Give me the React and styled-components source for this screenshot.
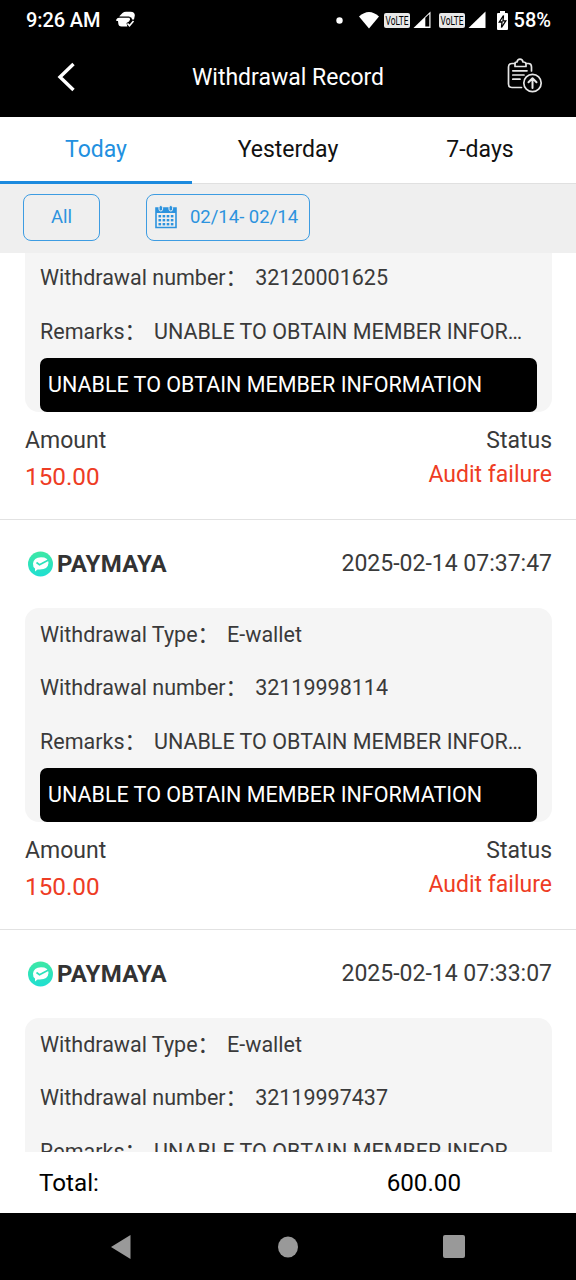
import styled, { createGlobalStyle } from 'styled-components';

const records = [
  { id: '32120001625', type: 'E-wallet', time: '2025-02-14 07:41:22', amount: '150.00' },
  { id: '32119998114', type: 'E-wallet', time: '2025-02-14 07:37:47', amount: '150.00' },
  { id: '32119997437', type: 'E-wallet', time: '2025-02-14 07:33:07', amount: '150.00' },
];

const REMARK = 'UNABLE TO OBTAIN MEMBER INFORMATION';

const GlobalStyle = createGlobalStyle`
  * {
    box-sizing: border-box;
  }
  body {
    margin: 0;
    background: #000;
    font-family: Roboto, 'Noto Sans CJK SC', sans-serif;
  }
  svg {
    display: block;
    flex-shrink: 0;
  }
`;

const Screen = styled.div`
  width: 576px;
  height: 1280px;
  display: flex;
  flex-direction: column;
  overflow: hidden;
  background: #fff;
`;

const StatusBar = styled.div`
  height: 40px;
  flex-shrink: 0;
  display: flex;
  align-items: center;
  justify-content: space-between;
  padding: 0 25px 0 26px;
  background: #000;
  color: #fff;
  font-size: 20px;
  font-weight: 500;
`;

const StatusGroup = styled.div`
  display: flex;
  align-items: center;
`;

const Clock = styled.span`
  letter-spacing: -0.1px;
  margin-right: 16px;
`;

const Network = styled(StatusGroup)`
  gap: 3px;
  margin-right: ${(props) => props.$gap};
`;

const Battery = styled.span`
  margin-left: 6px;
`;

const Header = styled.header`
  height: 77px;
  flex-shrink: 0;
  display: grid;
  grid-template-columns: 132px 1fr 132px;
  align-items: center;
  padding-bottom: 3px;
  background: #000;
  color: #fff;
`;

const BackButton = styled.button`
  height: 60px;
  padding: 0;
  border: none;
  background: none;
  display: flex;
  align-items: center;
  justify-content: center;
`;

const HeaderTitle = styled.h1`
  margin: 0;
  font-size: 23px;
  font-weight: 400;
  text-align: center;
`;

const HeaderAction = styled(BackButton)`
  justify-content: flex-end;
  padding: 0 33px 4px 0;
`;

const Tabs = styled.nav`
  height: 67px;
  flex-shrink: 0;
  display: grid;
  grid-template-columns: repeat(3, 1fr);
  border-bottom: 1px solid #e0e0e0;
`;

const Tab = styled.div`
  height: 67px;
  padding-bottom: ${(props) => (props.$active ? '0' : '3px')};
  display: flex;
  align-items: center;
  justify-content: center;
  font-size: 23px;
  color: ${(props) => (props.$active ? '#2290e0' : '#111')};
  border-bottom: ${(props) => props.$active && '3px solid #1c8ade'};
`;

const Filters = styled.div`
  height: 69px;
  flex-shrink: 0;
  display: flex;
  align-items: flex-start;
  gap: 46px;
  padding: 10px 23px;
  background: #efefef;
`;

const FilterButton = styled.button`
  width: ${(props) => props.$width};
  height: 47px;
  display: flex;
  align-items: center;
  justify-content: center;
  gap: 13px;
  padding: 0 ${(props) => props.$inset || '0'} 1px 0;
  border: 1px solid #3d9ce2;
  border-radius: 8px;
  background: none;
  color: #2c93de;
  font-family: inherit;
  font-size: 18.5px;
`;

const List = styled.main`
  height: 899px;
  flex-shrink: 0;
  overflow: hidden;
`;

/* list is scrolled part of the way through the first record */
const Scrolled = styled.div`
  margin-top: -143px;
`;

const Record = styled.article`
  height: 410px;
  padding: 0 24px 0 25px;
  border-bottom: 1px solid #e2e2e2;
  color: #3a3a3a;
`;

const RecordTop = styled.div`
  height: 87.5px;
  display: flex;
  align-items: center;
  justify-content: space-between;
`;

const Wallet = styled.div`
  display: flex;
  align-items: center;
  gap: 4px;
  padding-left: 3px;
  color: #333;
  font-size: 24px;
  font-weight: 700;
  letter-spacing: 0.25px;
`;

const Time = styled.span`
  font-size: 23px;
`;

const Card = styled.div`
  height: 214.5px;
  padding: 0 15px;
  border-radius: 14px;
  background: #f5f5f5;
`;

const Row = styled.div`
  height: 53.5px;
  display: flex;
  font-size: 21.5px;
  line-height: 53px;
`;

const Label = styled.span`
  white-space: nowrap;
`;

const Value = styled.span`
  margin-left: 8px;
  max-width: 373px;
  overflow: hidden;
  text-overflow: ellipsis;
  white-space: nowrap;
`;

const RemarkBox = styled.div`
  height: 54px;
  padding: 0 8px 2px;
  display: flex;
  align-items: center;
  border-radius: 7px;
  background: #000;
  color: #fff;
  font-size: 21.5px;
  white-space: nowrap;
`;

const Summary = styled.div`
  display: flex;
  justify-content: space-between;
  padding-top: 11px;
`;

const SummaryColumn = styled.div`
  text-align: ${(props) => props.$align || 'left'};
  font-size: 23px;
  line-height: 36px;
`;

const Amount = styled.div`
  color: #ee3c24;
  font-size: 24.3px;
  line-height: 35px;
`;

const State = styled.div`
  color: #ee3c24;
  line-height: 31px;
`;

const Total = styled.footer`
  height: 61px;
  flex-shrink: 0;
  display: flex;
  align-items: center;
  justify-content: space-between;
  padding: 0 115px 0 39px;
  color: #000;
  font-size: 24.2px;
`;

const NavBar = styled.div`
  flex: 1;
  display: grid;
  grid-template-columns: 133px 1fr 133px;
  align-items: center;
  background: #000;
`;

const NavItem = styled.div`
  display: flex;
  justify-content: ${(props) => props.$justify};
  padding-right: ${(props) => props.$justify === 'flex-end' && '2px'};
`;

const VolteBadge = () => (
  <svg width="26" height="15" viewBox="0 0 26 15">
    <rect width="26" height="15" rx="2" fill="#e8e8e8" />
    <text
      x="13"
      y="12"
      textAnchor="middle"
      textLength="23"
      lengthAdjust="spacingAndGlyphs"
      fontSize="12"
      fontWeight="400"
      fill="#000"
    >
      VoLTE
    </text>
  </svg>
);

const NotificationIcon = () => (
  <svg width="20" height="18" viewBox="0 0 20 18">
    <path d="M3.500 5 6.500 2Q8 .7 10 .7H14.500Q19 .7 18.800 4.500L18 8.500H16L15.500 6.700 13 5.500H3.500Z" fill="#fff" />
    <path d="M.3 8.500Q1 6.800 3 6.800H13.500Q15 8.500 13 10.500L10.500 12 11.300 15.500H5.500Q2.500 15.500 2.300 12.500L2 10H.3Z" fill="#fff" />
    <path d="m11.500 12.500 2 2.200L17.500 10" fill="none" stroke="#fff" strokeWidth="1.600" />
  </svg>
);

const WifiIcon = () => (
  <svg width="20" height="18" viewBox="0 0 20 18">
    <path d="M0 5.500Q10-3.500 20 5.500L10 17.500Z" fill="#fff" />
  </svg>
);

const DotIcon = () => (
  <svg width="7" height="7" viewBox="0 0 7 7">
    <circle cx="3.500" cy="3.500" r="3.200" fill="#fff" />
  </svg>
);

const Signal = ({ weak }) => (
  <svg width="18" height="18" viewBox="0 0 18 18">
    <path d="M17.500 .5V17H.5Z" fill="#fff" />
    {weak && <path d="M12.300 6.800 16.300 3V15.500H12.300Z" fill="#000" />}
  </svg>
);

const BatteryIcon = () => (
  <svg width="11" height="19" viewBox="0 0 11 19">
    <path d="M3 0H8V2H10Q11 2 11 3V18Q11 19 10 19H1Q0 19 0 18V3Q0 2 1 2H3Z" fill="#fff" />
    <path d="M6.500 4.500 2.300 11H5L4.500 16.500 8.800 9.800H6Z" fill="none" stroke="#000" strokeWidth="1.300" />
  </svg>
);

const RecordIcon = () => (
  <svg width="36" height="35" viewBox="0 0 36 35" fill="none" stroke="#e6e6e6" strokeWidth="1.700" strokeLinecap="round" strokeLinejoin="round">
    <path d="M8 5.500H5Q1.500 5.500 1.500 9V26Q1.500 29.500 5 29.500H14.500M19 5.500H21.500Q24.500 5.500 24.500 9V13" />
    <path d="M8 8.500V5.500Q8 4 10 4Q10.500 1.200 13 1.200T16 4Q19 4 19 6V8.500Z" />
    <path d="M5.800 12.800H20M5.800 17H17M5.800 21.200H13" />
    <circle cx="25.500" cy="25" r="8.700" />
    <path d="M25.500 30V20.500M21.500 24.200 25.500 20.300 29.500 24.200" strokeWidth="2" />
  </svg>
);

const CalendarIcon = () => (
  <svg width="22" height="24" viewBox="0 0 22 24">
    <path d="M1 3H21V22.500H1Z" fill="none" stroke="#2c93de" strokeWidth="1.600" />
    <path d="M1 3H21V8H1Z" fill="#2c93de" />
    {[5.800, 15.800].map((x) => (
      <rect key={x} x={x - 1.800} y="0.500" width="3.600" height="5.500" rx="1.800" fill="#2c93de" stroke="#efefef" />
    ))}
    {[10, 14, 18].map((y) =>
      [3.500, 7.600, 11.700, 15.800].map((x) => (
        <rect key={`${x}-${y}`} x={x} y={y} width="2.600" height="2.400" fill="#2c93de" />
      ))
    )}
  </svg>
);

const WalletLogo = () => (
  <svg width="25" height="26" viewBox="0 0 25 26">
    <defs>
      <linearGradient id="mint" x1="0" y1="0" x2="0" y2="1">
        <stop offset="0" stopColor="#3ee8a4" />
        <stop offset="1" stopColor="#1fdfd2" />
      </linearGradient>
    </defs>
    <circle cx="12.500" cy="13" r="12.500" fill="url(#mint)" />
    <path d="M5 12.500Q5.500 6.500 13 6.200Q20.500 6.200 20.500 12Q20 18.500 12 18.500H9.500L7 20.500V17.500Q4.800 16 5 12.500Z" fill="#fff" />
    <path d="m8.500 11.500 3 2.200 9-4.700" fill="none" stroke="#2ce2bb" strokeWidth="1.700" />
  </svg>
);

const App = () => {
  return (
    <Screen>
      <GlobalStyle />

      <StatusBar>
        <StatusGroup>
          <Clock>9:26 AM</Clock>
          <NotificationIcon />
        </StatusGroup>
        <StatusGroup>
          <Network $gap="16px">
            <DotIcon />
          </Network>
          <Network $gap="5px">
            <WifiIcon />
          </Network>
          <Network $gap="8px">
            <VolteBadge />
            <Signal weak />
          </Network>
          <Network $gap="11px">
            <VolteBadge />
            <Signal />
          </Network>
          <BatteryIcon />
          <Battery>58%</Battery>
        </StatusGroup>
      </StatusBar>

      <Header>
        <BackButton aria-label="Back">
          <svg width="20" height="30" viewBox="0 0 20 30">
            <path d="M17.500 2 4 15 17.500 28" fill="none" stroke="#fff" strokeWidth="3.400" />
          </svg>
        </BackButton>
        <HeaderTitle>Withdrawal Record</HeaderTitle>
        <HeaderAction aria-label="Records">
          <RecordIcon />
        </HeaderAction>
      </Header>

      <Tabs>
        <Tab $active>Today</Tab>
        <Tab>Yesterday</Tab>
        <Tab>7-days</Tab>
      </Tabs>

      <Filters>
        <FilterButton $width="77px">All</FilterButton>
        <FilterButton $width="164px" $inset="3px">
          <CalendarIcon />
          02/14- 02/14
        </FilterButton>
      </Filters>

      <List>
        <Scrolled>
          {records.map((record) => (
            <Record key={record.id}>
              <RecordTop>
                <Wallet>
                  <WalletLogo />
                  PAYMAYA
                </Wallet>
                <Time>{record.time}</Time>
              </RecordTop>

              <Card>
                <Row>
                  <Label>Withdrawal Type：</Label>
                  <Value>{record.type}</Value>
                </Row>
                <Row>
                  <Label>Withdrawal number：</Label>
                  <Value>{record.id}</Value>
                </Row>
                <Row>
                  <Label>Remarks：</Label>
                  <Value>{REMARK}</Value>
                </Row>
                <RemarkBox>{REMARK}</RemarkBox>
              </Card>

              <Summary>
                <SummaryColumn>
                  <div>Amount</div>
                  <Amount>{record.amount}</Amount>
                </SummaryColumn>
                <SummaryColumn $align="right">
                  <div>Status</div>
                  <State>Audit failure</State>
                </SummaryColumn>
              </Summary>
            </Record>
          ))}
        </Scrolled>
      </List>

      <Total>
        <span>Total:</span>
        <span>600.00</span>
      </Total>

      <NavBar>
        <NavItem $justify="flex-end">
          <svg width="20" height="24" viewBox="0 0 20 24">
            <path d="M19.500 0V24L0 12Z" fill="#999" />
          </svg>
        </NavItem>
        <NavItem $justify="center">
          <svg width="20" height="22" viewBox="0 0 20 22">
            <ellipse cx="10" cy="11" rx="10" ry="10.500" fill="#999" />
          </svg>
        </NavItem>
        <NavItem $justify="flex-start">
          <svg width="22" height="24" viewBox="0 0 22 24">
            <rect width="22" height="23" rx="2" fill="#999" />
          </svg>
        </NavItem>
      </NavBar>
    </Screen>
  );
};

export default App;
